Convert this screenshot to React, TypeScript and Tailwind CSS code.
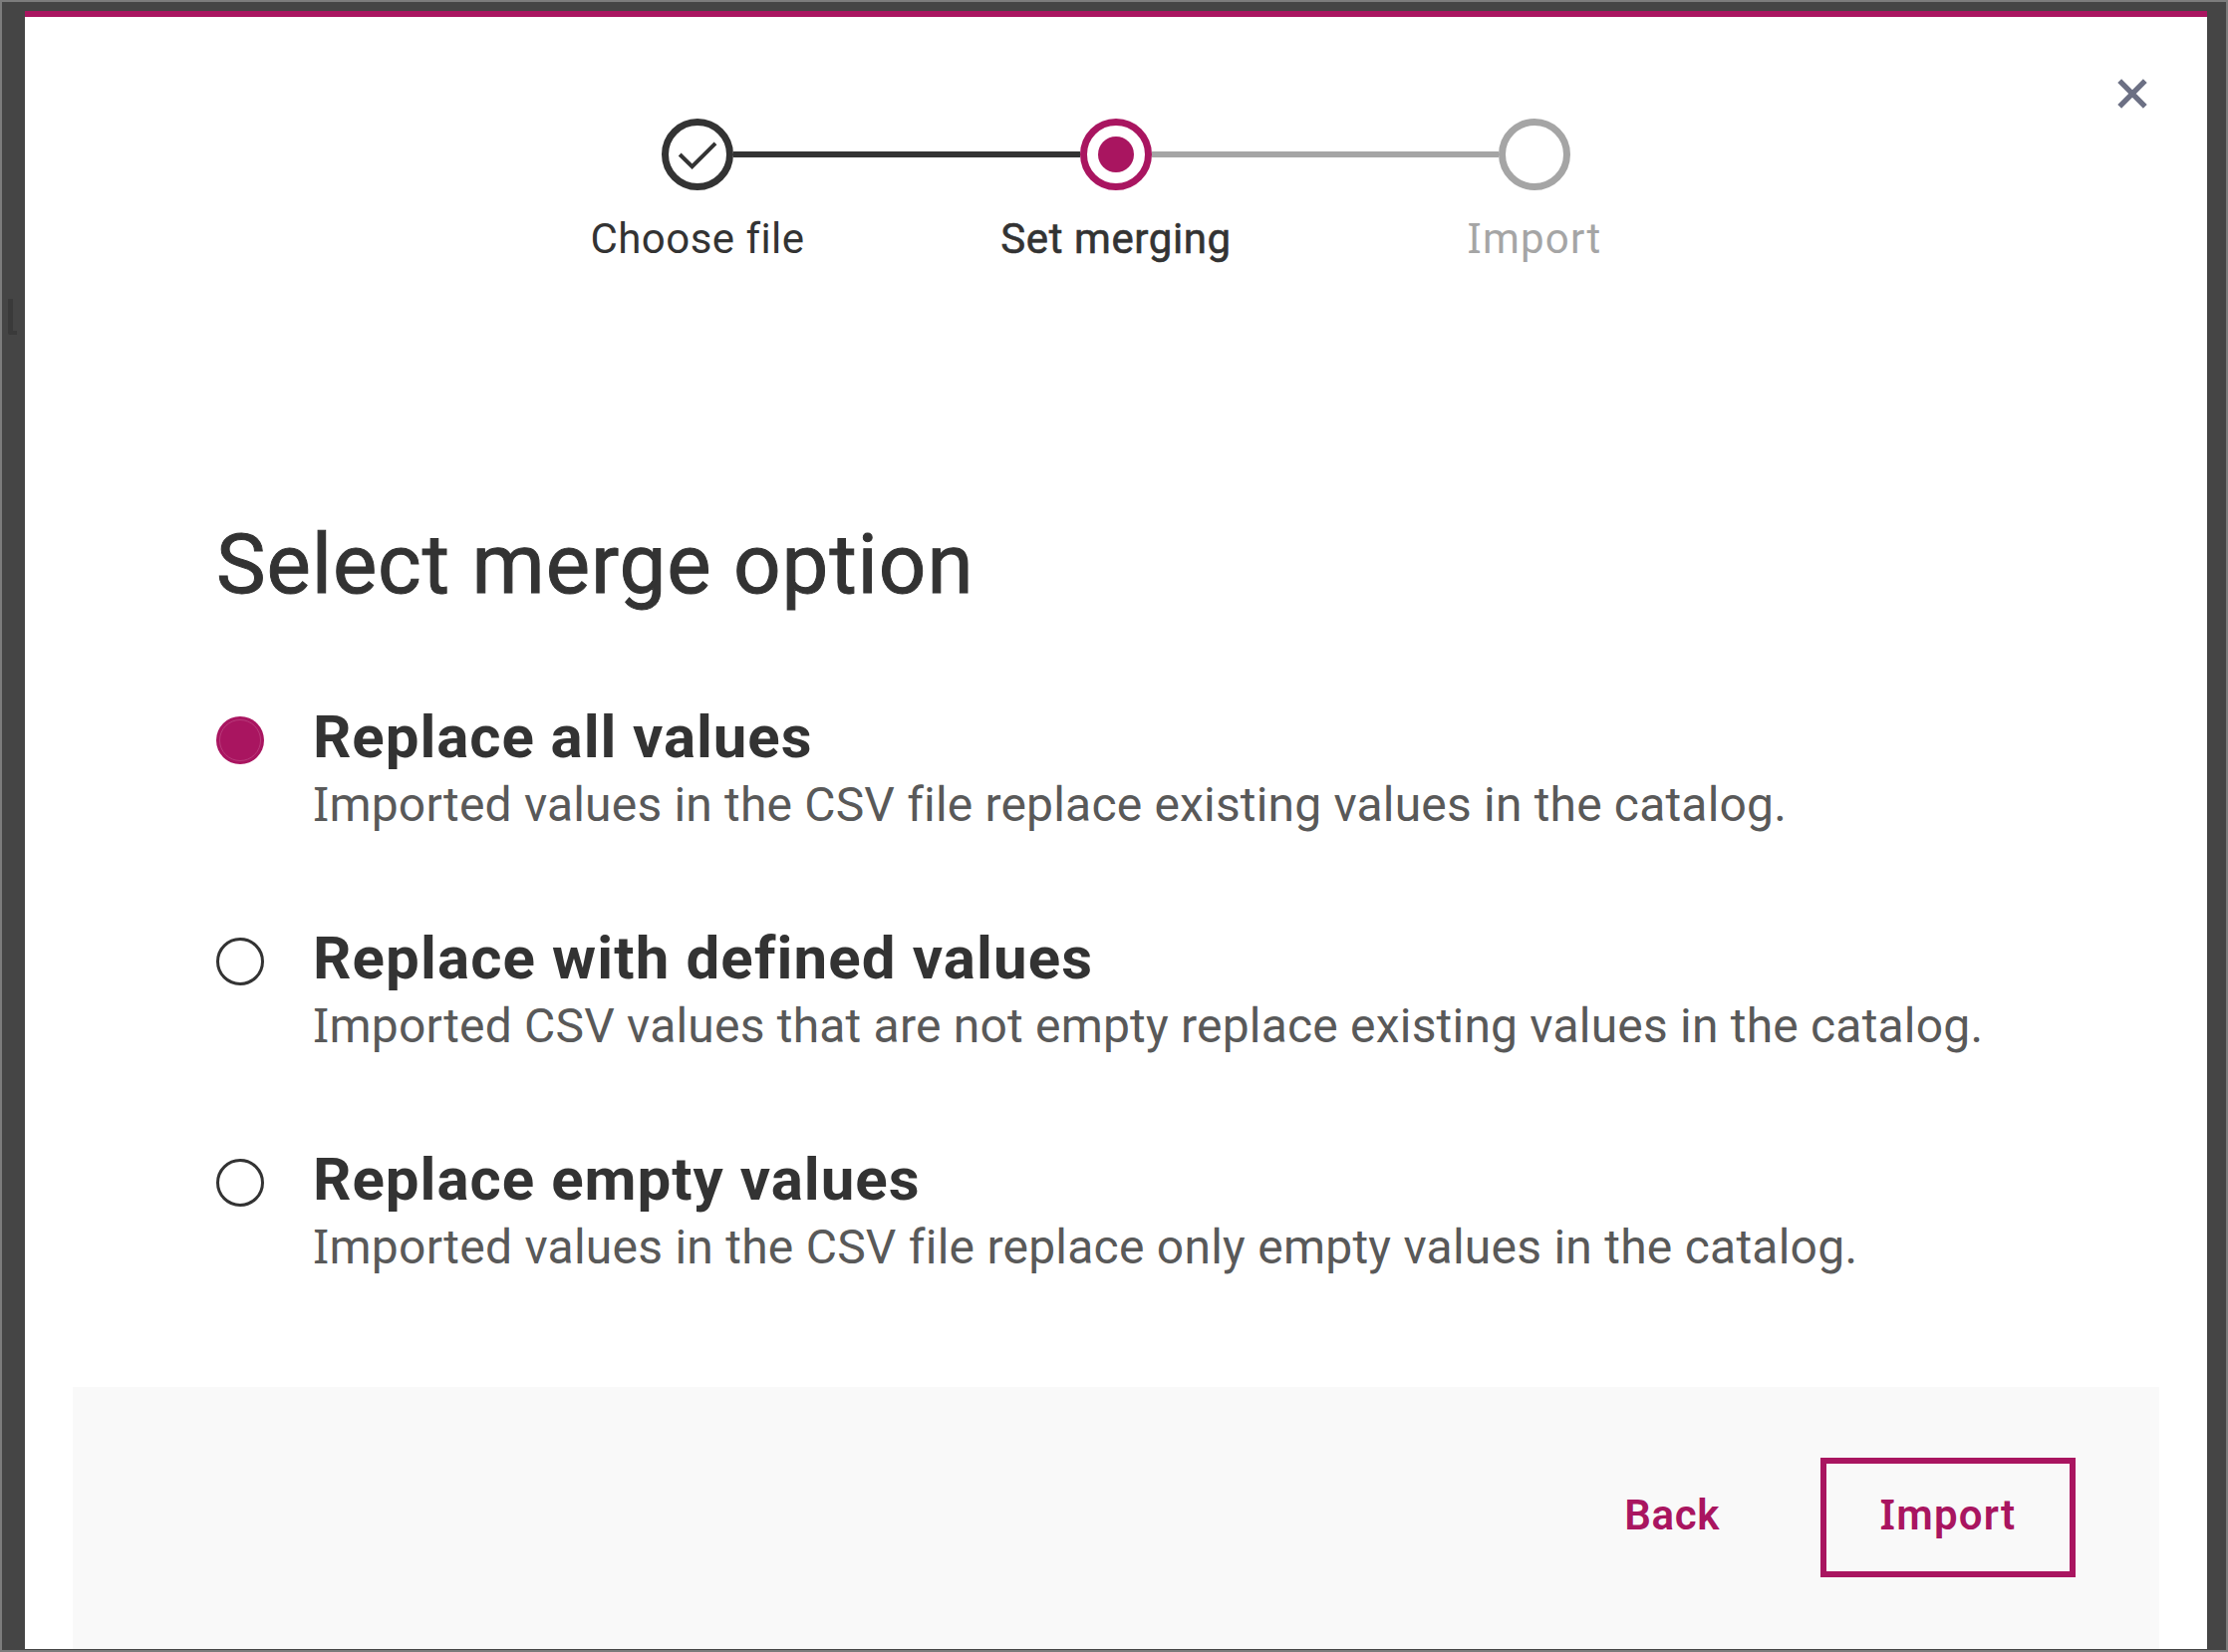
import React, { Fragment, useState } from 'react';

function Label({ children }: { children: string }) {
  const parts = children.split('I');
  return (
    <>
      {parts.map((part, i) => (
        <Fragment key={i}>
          {i > 0 && <span className="font-['Noto_Sans',sans-serif] leading-[0]">I</span>}
          {part}
        </Fragment>
      ))}
    </>
  );
}

const options = [
  {
    title: 'Replace all values',
    text: 'Imported values in the CSV file replace existing values in the catalog.',
    titleClass: 'tracking-[0.93px]',
    textClass: 'tracking-[0.18px]',
  },
  {
    title: 'Replace with defined values',
    text: 'Imported CSV values that are not empty replace existing values in the catalog.',
    titleClass: 'tracking-[1.12px]',
    textClass: 'tracking-[0.2px]',
  },
  {
    title: 'Replace empty values',
    text: 'Imported values in the CSV file replace only empty values in the catalog.',
    titleClass: 'tracking-[1px]',
    textClass: 'tracking-[0.24px]',
  },
];

function Stepper() {
  return (
    <ol className="mx-auto mt-[102px] flex w-[1260px]">
      <li className="flex w-[420px] flex-col items-center text-[#333333]">
        <div className="flex w-full items-center">
          <span className="flex-1" />
          <span className="flex size-[72px] items-center justify-center rounded-full border-[7px] border-[#333333]">
            <svg viewBox="0 0 40 30" className="h-[30px] w-[40px] shrink-0" fill="none" stroke="currentColor" strokeWidth="4">
              <path d="M2.2 15 L14.6 27.1 L38 3.9" />
            </svg>
          </span>
          <span className="h-[6px] flex-1 bg-[#333333]" />
        </div>
        <span className="mt-[25px] text-[42px] leading-[48px] tracking-[0.45px]">Choose file</span>
      </li>
      <li className="flex w-[420px] flex-col items-center text-[#333333]">
        <div className="flex w-full items-center">
          <span className="h-[6px] flex-1 bg-[#333333]" />
          <span className="flex size-[72px] items-center justify-center rounded-full border-[7px] border-[#a91560]">
            <span className="size-[36px] rounded-full bg-[#a91560]" />
          </span>
          <span className="h-[6px] flex-1 bg-[#a5a5a5]" />
        </div>
        <span className="mt-[25px] text-[42px] leading-[48px] tracking-[0.6px] [-webkit-text-stroke:0.6px_currentColor]">
          Set merging
        </span>
      </li>
      <li className="flex w-[420px] flex-col items-center text-[#a5a5a5]">
        <div className="flex w-full items-center">
          <span className="h-[6px] flex-1 bg-[#a5a5a5]" />
          <span className="size-[72px] rounded-full border-[7px] border-[#a5a5a5]" />
          <span className="flex-1" />
        </div>
        <span className="mt-[25px] text-[42px] leading-[48px] tracking-[1.2px]">
          <Label>Import</Label>
        </span>
      </li>
    </ol>
  );
}

export default function App() {
  const [selected, setSelected] = useState(0);
  return (
    <div className="flex h-[1658px] w-[2236px] flex-col overflow-hidden border-2 border-[#7c7c7c] bg-[#454545] font-['Roboto',sans-serif]">
      <div className="flex flex-1">
        <div className="w-[23px] pt-[298px] pl-[6px]">
          <div className="h-[36px] w-[9px] rounded-bl-[3px] border-b-[4px] border-l-[5px] border-[#3a3a3a]" />
        </div>
        <main className="relative mt-[9px] mb-px flex w-[2190px] flex-col border-t-[6px] border-[#a91560] bg-white">
          <button aria-label="Close" className="absolute top-[62px] right-[60px] size-[30px] text-[#6c7084]">
            <svg viewBox="0 0 30 30" className="size-full" stroke="currentColor" strokeWidth="5.4">
              <path d="M2.2 2.2 L27.8 27.8 M27.8 2.2 L2.2 27.8" />
            </svg>
          </button>
          <Stepper />
          <h1 className="mt-[253px] ml-[192px] text-[83.5px] leading-[100px] tracking-[0.92px] text-[#333333] [-webkit-text-stroke:1px_currentColor]">
            Select merge option
          </h1>
          <div className="mt-[89px] ml-[192px] flex flex-col gap-[88px]">
            {options.map((option, i) => (
              <label key={option.title} className="flex">
                <input type="radio" name="merge" className="sr-only" checked={selected === i} onChange={() => setSelected(i)} />
                {selected === i ? (
                  <span className="mt-[13px] flex size-[48px] items-center justify-center rounded-full bg-[#a91560]">
                    <span className="size-[42px] rounded-full border border-[#b83a7a] bg-[#a91560]" />
                  </span>
                ) : (
                  <span className="mt-[13px] size-[48px] rounded-full border-[3px] border-[#333333]" />
                )}
                <span className="ml-[49px] flex flex-col whitespace-nowrap">
                  <span className={`text-[60px] leading-[68px] font-bold text-[#333333] ${option.titleClass}`}>{option.title}</span>
                  <span className={`mt-[2px] text-[48px] leading-[64px] text-[#595959] ${option.textClass}`}>
                    <Label>{option.text}</Label>
                  </span>
                </span>
              </label>
            ))}
          </div>
          <footer className="mx-[48px] mt-auto flex h-[263px] items-start justify-end bg-[#f9f9f9] pt-[71px] pr-[84px] text-[42px] font-semibold text-[#a91560]">
            <button className="mr-[101px] h-[120px] pb-[5px] tracking-[0.6px]">Back</button>
            <button className="h-[120px] w-[256px] border-[6px] border-[#a91560] pb-[5px] tracking-[1.2px]">
              <Label>Import</Label>
            </button>
          </footer>
        </main>
      </div>
    </div>
  );
}
